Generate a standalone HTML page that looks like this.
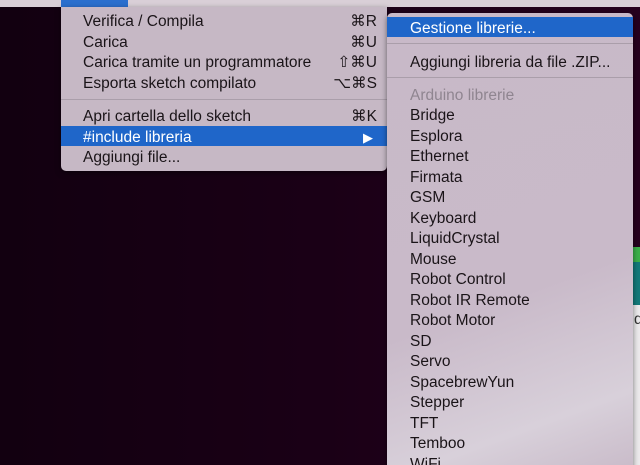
<!DOCTYPE html>
<html><head><meta charset="utf-8"><style>
*{margin:0;padding:0;box-sizing:border-box}
html,body{width:640px;height:465px;overflow:hidden}
body{position:relative;background:linear-gradient(90deg,#120010 0%,#1a0016 50%,#26001e 100%);font-family:"Liberation Sans",sans-serif;font-size:15.5px;color:#1a1418}
.bar{position:absolute;left:0;top:0;width:640px;height:7px;background:#d9cfd7}
.bar i{position:absolute;left:61px;top:0;width:67px;height:7px;background:#2a6fce}
.m{position:absolute;background:#c6b8c5;border-radius:5px;box-shadow:0 2px 6px rgba(0,0,0,.5)}
.t{position:absolute;white-space:nowrap;line-height:20px;margin-top:2px}
.hl{position:absolute;background:#1f66c9}
.sep{position:absolute;height:1px;background:#aa9eaa}
.k{position:absolute;white-space:nowrap;line-height:20px;text-align:right;margin-top:2px}
</style></head><body>
<div class="bar"><i></i></div>
<div style="position:absolute;left:633px;top:247px;width:7px;height:15px;background:#3cb04a"></div>
<div style="position:absolute;left:633px;top:262px;width:7px;height:43px;background:#137a7a"></div>
<div style="position:absolute;left:633px;top:305px;width:7px;height:160px;background:#eceaec"></div>
<div class="t" style="left:634px;top:308px;color:#333">d</div>

<div class="m" style="left:61px;top:7px;width:326px;height:164px;border-radius:0 0 5px 5px">
  <div class="t" style="left:22px;top:3px">Verifica / Compila</div><div class="k" style="right:10px;top:3px">⌘R</div>
  <div class="t" style="left:22px;top:24px">Carica</div><div class="k" style="right:10px;top:24px">⌘U</div>
  <div class="t" style="left:22px;top:44px">Carica tramite un programmatore</div><div class="k" style="right:10px;top:44px">⇧⌘U</div>
  <div class="t" style="left:22px;top:65px">Esporta sketch compilato</div><div class="k" style="right:10px;top:65px">⌥⌘S</div>
  <div class="sep" style="left:0;top:92px;width:326px"></div>
  <div class="t" style="left:22px;top:98px">Apri cartella dello sketch</div><div class="k" style="right:10px;top:98px">⌘K</div>
  <div class="hl" style="left:0;top:119px;width:326px;height:20px"></div>
  <div class="t" style="left:22px;top:119px;color:#fff">#include libreria</div><div class="k" style="right:14px;top:119px;color:#fff;font-size:13px">▶</div>
  <div class="t" style="left:22px;top:139px">Aggiungi file...</div>
</div>

<div class="m" style="left:387px;top:13px;width:246px;height:460px;background:linear-gradient(160deg,#c8b9c8 0%,#c9bac9 60%,#d8d0da 85%,#c8bac8 100%)">
  <div class="hl" style="left:0;top:4px;width:246px;height:20px"></div>
  <div class="t" style="left:23px;top:4px;color:#fff">Gestione librerie...</div>
  <div class="sep" style="left:0;top:30px;width:246px"></div>
  <div class="t" style="left:23px;top:38px">Aggiungi libreria da file .ZIP...</div>
  <div class="sep" style="left:0;top:64px;width:246px"></div>
  <div class="t" style="left:23px;top:71px;color:#8f8590">Arduino librerie</div>
  <div class="t" style="left:23px;top:91px">Bridge</div>
  <div class="t" style="left:23px;top:112px">Esplora</div>
  <div class="t" style="left:23px;top:132px">Ethernet</div>
  <div class="t" style="left:23px;top:153px">Firmata</div>
  <div class="t" style="left:23px;top:173px">GSM</div>
  <div class="t" style="left:23px;top:194px">Keyboard</div>
  <div class="t" style="left:23px;top:214px">LiquidCrystal</div>
  <div class="t" style="left:23px;top:235px">Mouse</div>
  <div class="t" style="left:23px;top:255px">Robot Control</div>
  <div class="t" style="left:23px;top:276px">Robot IR Remote</div>
  <div class="t" style="left:23px;top:296px">Robot Motor</div>
  <div class="t" style="left:23px;top:317px">SD</div>
  <div class="t" style="left:23px;top:337px">Servo</div>
  <div class="t" style="left:23px;top:358px">SpacebrewYun</div>
  <div class="t" style="left:23px;top:378px">Stepper</div>
  <div class="t" style="left:23px;top:399px">TFT</div>
  <div class="t" style="left:23px;top:419px">Temboo</div>
  <div class="t" style="left:23px;top:440px">WiFi</div>
</div>
</body></html>
